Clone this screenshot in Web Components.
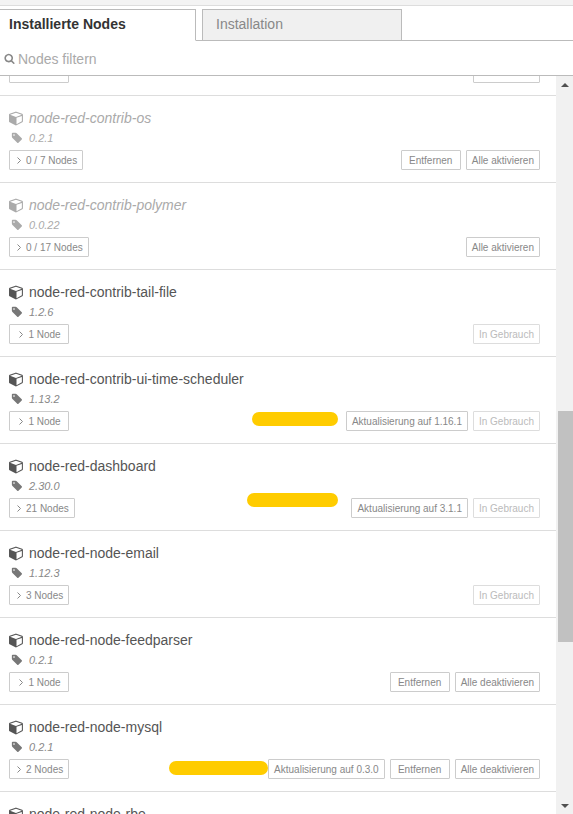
<!DOCTYPE html>
<html lang="de"><head><meta charset="utf-8"><title>Palette</title>
<style>html,body{margin:0;padding:0;height:814px;overflow:hidden;background:#fff;font-family:"Liberation Sans",Arial,sans-serif}</style>
</head><body>
<palette-manager>
  <palette-tab slot="tabs" active>Installierte Nodes</palette-tab>
  <palette-tab slot="tabs">Installation</palette-tab>

  <palette-node slot="nodes" nodes="" blank>
    <node-btn slot="actions" style="width:67px"></node-btn>
  </palette-node>
  <palette-node slot="nodes" name="node-red-contrib-os" version="0.2.1" nodes="0 / 7 Nodes" off>
    <node-btn slot="actions">Entfernen</node-btn><node-btn slot="actions">Alle aktivieren</node-btn>
  </palette-node>
  <palette-node slot="nodes" name="node-red-contrib-polymer" version="0.0.22" nodes="0 / 17 Nodes" off>
    <node-btn slot="actions">Alle aktivieren</node-btn>
  </palette-node>
  <palette-node slot="nodes" name="node-red-contrib-tail-file" version="1.2.6" nodes="1 Node">
    <node-btn slot="actions" disabled>In Gebrauch</node-btn>
  </palette-node>
  <palette-node slot="nodes" name="node-red-contrib-ui-time-scheduler" version="1.13.2" nodes="1 Node" bar-right="218" bar-width="86" bar-bottom="17">
    <node-btn slot="actions">Aktualisierung auf 1.16.1</node-btn><node-btn slot="actions" disabled>In Gebrauch</node-btn>
  </palette-node>
  <palette-node slot="nodes" name="node-red-dashboard" version="2.30.0" nodes="21 Nodes" bar-right="218" bar-width="91" bar-bottom="23">
    <node-btn slot="actions">Aktualisierung auf 3.1.1</node-btn><node-btn slot="actions" disabled>In Gebrauch</node-btn>
  </palette-node>
  <palette-node slot="nodes" name="node-red-node-email" version="1.12.3" nodes="3 Nodes">
    <node-btn slot="actions" disabled>In Gebrauch</node-btn>
  </palette-node>
  <palette-node slot="nodes" name="node-red-node-feedparser" version="0.2.1" nodes="1 Node">
    <node-btn slot="actions">Entfernen</node-btn><node-btn slot="actions">Alle deaktivieren</node-btn>
  </palette-node>
  <palette-node slot="nodes" name="node-red-node-mysql" version="0.2.1" nodes="2 Nodes" bar-right="288" bar-width="99" bar-bottom="16">
    <node-btn slot="actions">Aktualisierung auf 0.3.0</node-btn><node-btn slot="actions">Entfernen</node-btn><node-btn slot="actions">Alle deaktivieren</node-btn>
  </palette-node>
  <palette-node slot="nodes" name="node-red-node-rbe" version="0.5.0" nodes="1 Node"></palette-node>
</palette-manager>
<script>
const CUBE='M896 1629l640-349v-636l-640 233v752zm-64-865l698-254-698-254-698 254zm832-252v768q0 35-18 65t-51 47l-704 384q-28 16-61 16t-61-16l-704-384q-33-17-51-47t-18-65v-768q0-40 23-73t61-47l704-256q22-8 44-8t44 8l704 256q38 14 61 47t23 73z';
const TAG='M576 448q0-53-37.5-90.5t-90.5-37.5-90.5 37.5-37.5 90.5 37.5 90.5 90.5 37.5 90.5-37.5 37.5-90.5zm1067 576q0 53-37 90l-491 492q-39 37-91 37-53 0-90-37l-715-716q-38-37-64.5-101t-26.5-117v-416q0-52 38-90t90-38h416q53 0 117 26.5t102 64.5l715 714q37 39 37 91z';
const SEARCH='M1216 832q0-185-131.5-316.5t-316.5-131.5-316.5 131.5-131.5 316.5 131.5 316.5 316.5 131.5 316.5-131.5 131.5-316.5zm512 832q0 52-38 90t-90 38q-54 0-90-38l-343-342q-179 124-399 124-143 0-273.5-55.5t-225-150-150-225-55.5-273.5 55.5-273.5 150-225 225-150 273.5-55.5 273.5 55.5 225 150 150 225 55.5 273.5q0 220-124 399l343 343q37 37 37 90z';
const svg=(d,s,c='currentColor')=>`<svg viewBox="0 0 1792 1792" width="${s}" height="${s}" fill="${c}" aria-hidden="true"><path d="${d}"/></svg>`;

class PaletteTab extends HTMLElement{
  constructor(){super();this.attachShadow({mode:'open'}).innerHTML=`<style>
  :host{display:flex;align-items:center;box-sizing:border-box;width:200px;height:32px;padding:0 0 2px 13px;margin-bottom:-1px;
    background:#f0f0f0;border:1px solid #bbb;color:#888;font:14px "Liberation Sans",Arial,sans-serif;}
  :host([active]){width:197px;margin-left:-1px;margin-right:6px;padding-left:9px;background:#fff;border-bottom-color:#fff;color:#333;font-weight:700}
  </style><slot></slot>`;}
}
class NodeBtn extends HTMLElement{
  constructor(){super();this.attachShadow({mode:'open'}).innerHTML=`<style>
  :host{display:inline-flex;align-items:center;justify-content:center;box-sizing:border-box;height:20px;min-width:60px;padding:0 5px;
    border:1px solid #ccc;border-radius:1px;background:#fff;color:#888;font:10px "Liberation Sans",Arial,sans-serif;white-space:nowrap}
  :host([disabled]){color:#bbb;border-color:#ddd}
  </style><slot></slot>`;}
}
class PaletteNode extends HTMLElement{
  constructor(){super();this.attachShadow({mode:'open'});}
  connectedCallback(){
    const a=k=>this.getAttribute(k);
    const bar=a('bar-right')?`<span class="bar" style="right:${a('bar-right')}px;width:${a('bar-width')}px;bottom:${a('bar-bottom')}px"></span>`:'';
    const blank=this.hasAttribute('blank');
    this.shadowRoot.innerHTML=`<style>
    :host{display:block;position:relative;box-sizing:border-box;height:87px;padding:13px 16px 0 9px;border-bottom:1px solid #ddd;
      color:#555;font-family:"Liberation Sans",Arial,sans-serif}
    .ic{flex:none;width:15px;display:flex;justify-content:center}
    .name{display:flex;align-items:center;gap:5px;height:18px;font-size:14px;color:#555}
    .ver{display:flex;align-items:center;gap:5px;height:16px;margin-top:3px;font-size:11px;font-style:italic;color:#888}
    .ver .ic{color:#777}
    :host([off]) .name{color:#aaa;font-style:italic}
    :host([off]) .ver{color:#aaa}
    :host([off]) .ver .ic{color:#aaa}
    .foot{display:flex;align-items:center;justify-content:space-between;margin-top:4px;height:20px}
    .count{display:inline-flex;align-items:center;justify-content:center;gap:5px;box-sizing:border-box;height:20px;min-width:60px;padding:0 5px 0 7px;border:1px solid #ccc;border-radius:1px;font-size:10px;color:#888;white-space:nowrap}
    .count svg{flex:none}
    .acts{display:flex;gap:5px}
    .bar{position:absolute;height:14px;border-radius:7px;background:#fc0}
    </style>
    ${blank?'<div class="name"></div><div class="ver"></div>':`<div class="name"><span class="ic">${svg(CUBE,16)}</span><span>${a('name')||''}</span></div>
    <div class="ver"><span class="ic">${svg(TAG,12)}</span><span>${a('version')||''}</span></div>`}
    <div class="foot"><span class="count">${blank?'':'<svg width="4" height="7" viewBox="0 0 4 7" fill="none" stroke="#888" stroke-width="1"><path d="M.5 .5 3.5 3.5 .5 6.5"/></svg>'}<span>${a('nodes')||''}</span></span>
    <span class="acts"><slot name="actions"></slot></span></div>${bar}`;
  }
}
class PaletteManager extends HTMLElement{
  constructor(){super();this.attachShadow({mode:'open'}).innerHTML=`<style>
  :host{display:flex;flex-direction:column;height:814px;overflow:hidden;background:#fff;font-family:"Liberation Sans",Arial,sans-serif}
  .top{flex:none;height:5px;background:#f3f3f3;border-bottom:1px solid #ddd}
  .tabs{flex:none;display:flex;align-items:flex-end;box-sizing:border-box;height:35px;border-bottom:1px solid #bbb}
  .filter{flex:none;display:flex;align-items:center;gap:3px;box-sizing:border-box;height:35px;padding:2px 0 0 4px;border-bottom:1px solid #bbb;color:#aaa;font-size:14px}
  .filter svg{color:#888;margin-top:-1px}
  .body{flex:1;min-height:0;display:flex}
  .list{flex:1;min-width:0;overflow:hidden}
  .inner{margin-top:-67px}
  .sb{flex:none;width:17px;display:flex;flex-direction:column;align-items:center;background:#f1f1f1}
  .arrow{flex:none;height:17px;display:flex;align-items:center;justify-content:center}
  .track{flex:1;display:flex;flex-direction:column;width:100%}
  .thumb{flex:none;width:15px;height:231px;margin:318px 0 0 2px;background:#c1c1c1}
  </style>
  <div class="top"></div>
  <div class="tabs"><slot name="tabs"></slot></div>
  <div class="filter">${svg(SEARCH,11)}<span>Nodes filtern</span></div>
  <div class="body">
    <div class="list"><div class="inner"><slot name="nodes"></slot></div></div>
    <div class="sb">
      <div class="arrow"><svg width="8" height="4" viewBox="0 0 8 4"><path d="M4 0 8 4H0z" fill="#505050"/></svg></div>
      <div class="track"><div class="thumb"></div></div>
      <div class="arrow"><svg width="8" height="4" viewBox="0 0 8 4"><path d="M0 0H8L4 4z" fill="#505050"/></svg></div>
    </div>
  </div>`;}
}
customElements.define('palette-tab',PaletteTab);
customElements.define('node-btn',NodeBtn);
customElements.define('palette-node',PaletteNode);
customElements.define('palette-manager',PaletteManager);
</script>
</body></html>
